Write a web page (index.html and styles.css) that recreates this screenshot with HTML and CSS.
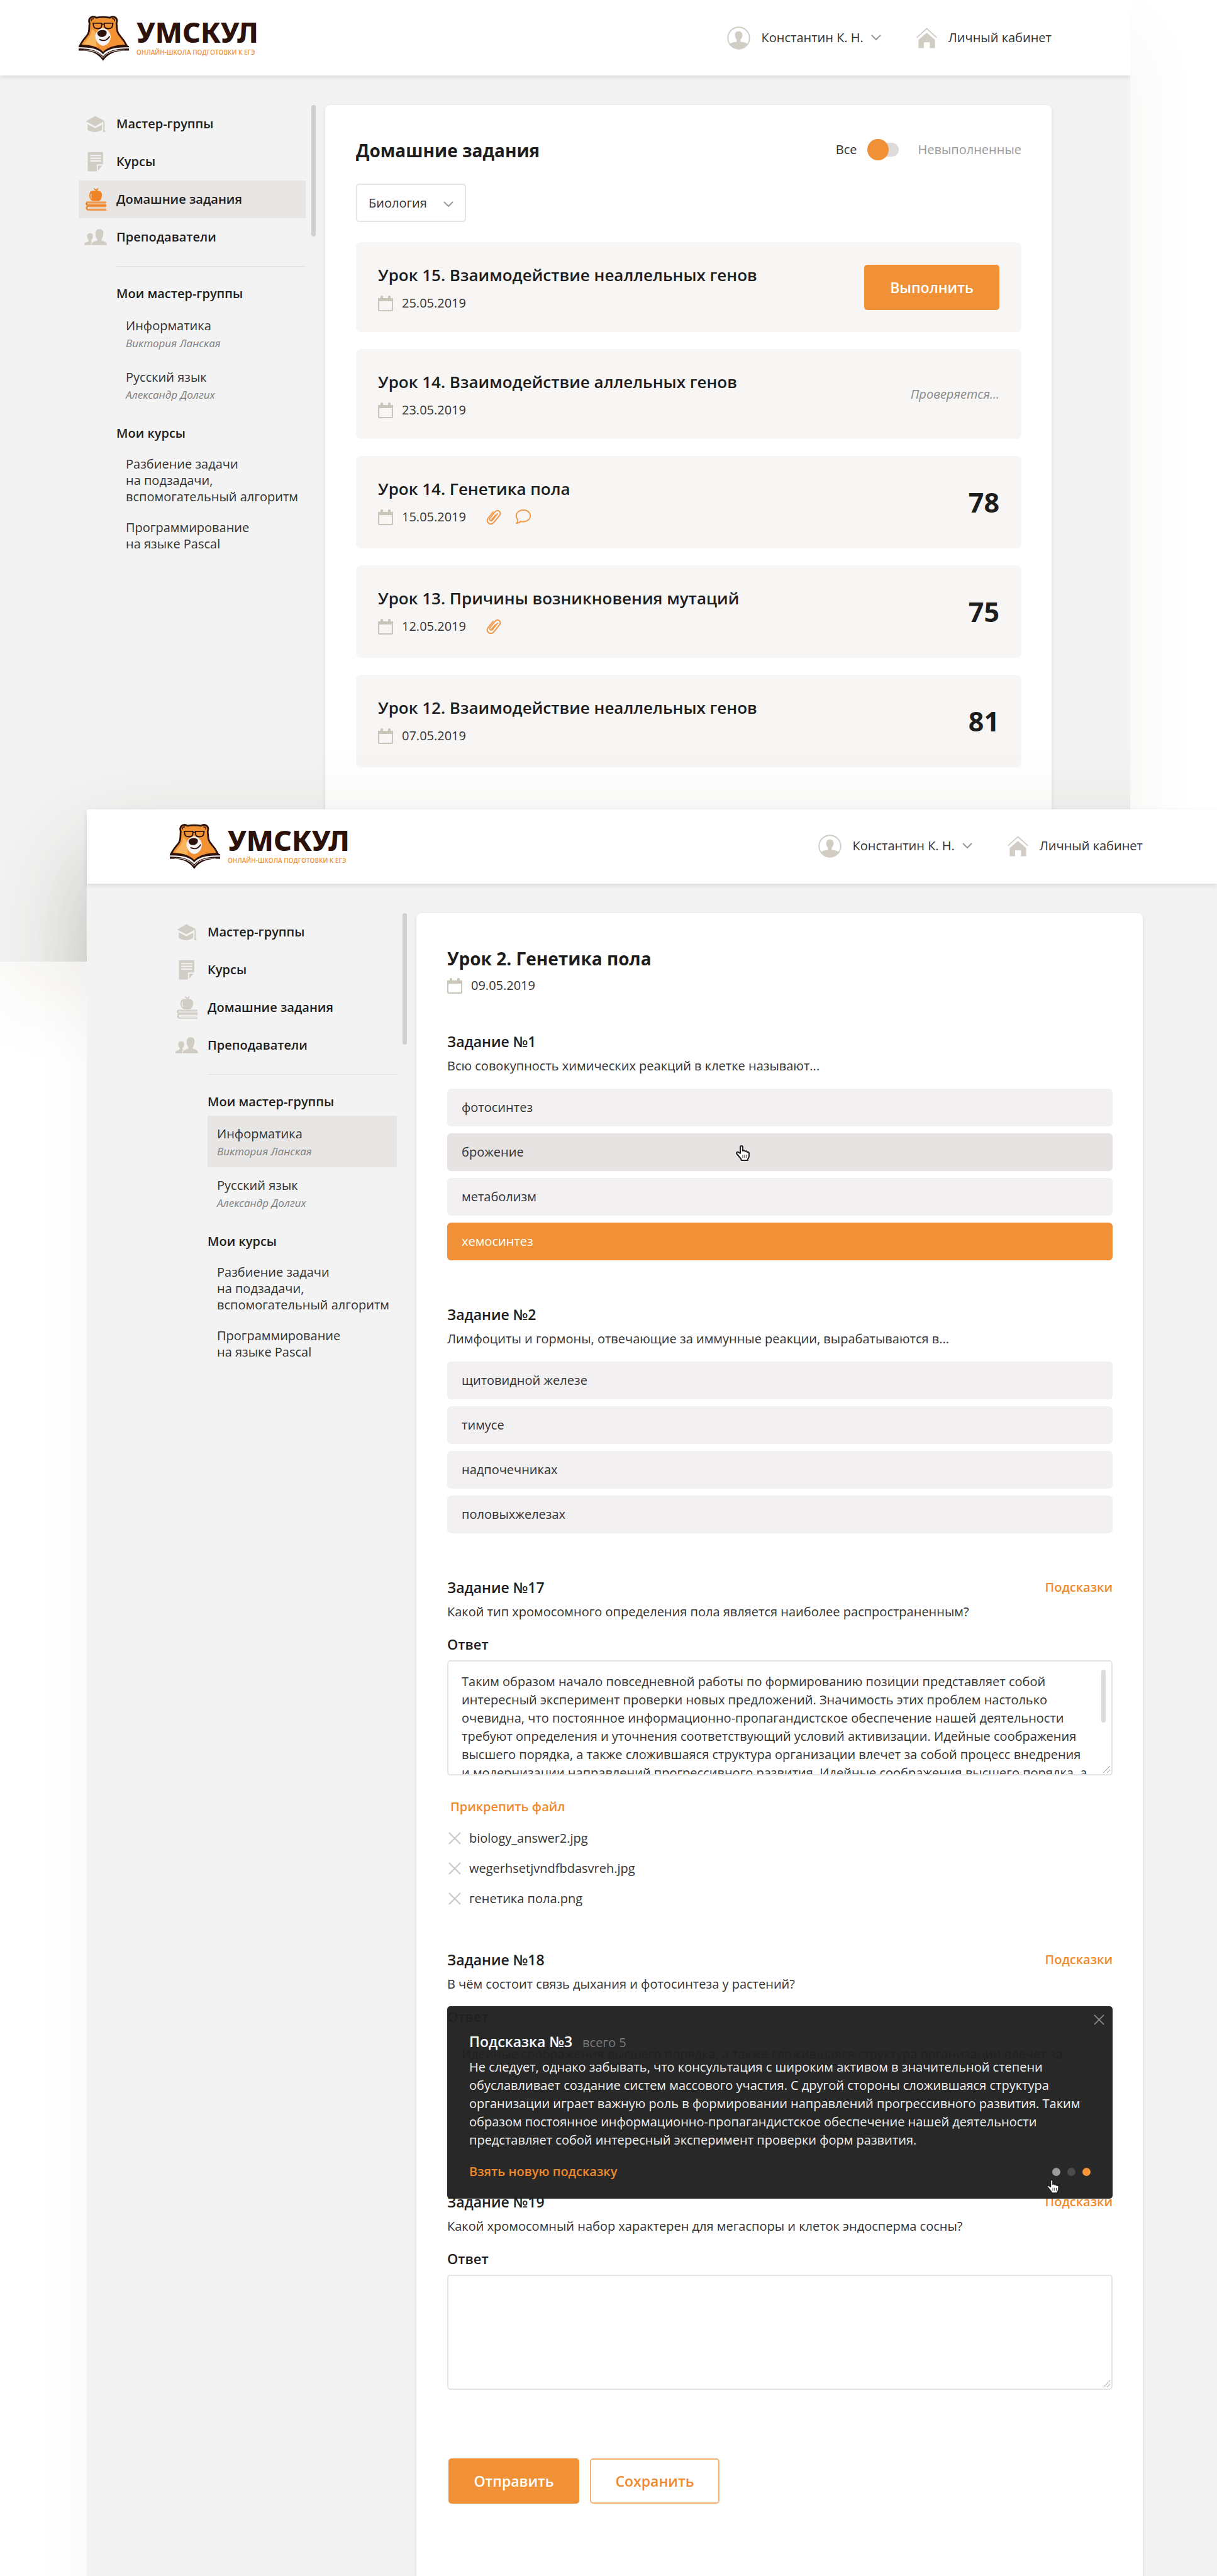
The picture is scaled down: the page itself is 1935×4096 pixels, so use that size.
FILE: index.html
```html
<!DOCTYPE html>
<html lang="ru">
<head>
<meta charset="utf-8">
<meta name="viewport" content="width=device-width, initial-scale=1">
<title>Умскул — домашние задания</title>
<link rel="stylesheet" href="styles.css">
</head>
<body>
<svg class="sprite" aria-hidden="true">
  <symbol id="i-bear" viewBox="0 0 258 230">
    <path d="M56 38C46 10 72-4 90 9Q125 2 160 9C180-4 204 10 194 38C198 62 192 82 214 104Q234 126 247 153Q165 150 125 190Q88 150 6 153Q20 126 40 104C60 82 52 62 56 38Z" fill="#f29232" stroke="#2d120b" stroke-width="9" stroke-linejoin="round"/>
    <path d="M68 66Q68 96 50 114Q34 132 27 146Q66 148 92 160L86 84Z" fill="#fab65c"/>
    <path d="M66 28Q62 14 78 14M184 28Q188 14 172 14" fill="none" stroke="#2d120b" stroke-width="5"/>
    <path d="M125 62C98 66 82 90 86 112C90 134 108 152 126 154C144 152 162 134 164 112C168 90 150 66 125 62Z" fill="#f4f2f2"/>
    <path d="M74 37H118V50Q117 65 98 65Q79 65 77 52ZM132 37H176L173 52Q171 65 152 65Q133 65 132 50ZM118 42H132" fill="none" stroke="#2d120b" stroke-width="6" stroke-linejoin="round"/>
    <path d="M96 88C96 70 144 66 144 86C144 100 130 108 120 108C108 108 96 100 96 88Z" fill="#2d120b"/>
    <path d="M108 121Q138 136 158 106" fill="none" stroke="#2d120b" stroke-width="6" stroke-linecap="round"/>
    <path d="M0 154Q100 152 125 190Q150 152 258 154V178H236Q160 180 125 230Q92 180 22 178H0Z" fill="#2d120b"/>
    <path d="M0 161Q98 158 125 197Q152 158 258 161V167Q160 166 125 207Q90 166 0 167Z" fill="#fff"/>
    <path d="M24 175Q96 172 125 214Q154 172 236 175" fill="none" stroke="#fff" stroke-width="3"/>
  </symbol>
  <symbol id="i-cap" viewBox="0 0 116 116">
    <path d="M8 45L56 18L104 43L56 70Z"/>
    <path d="M17 60L56 80L91 62V88Q72 100 54 100Q34 100 17 88Z"/>
    <path d="M98 46H104V86L109 99H95L98 86Z"/>
  </symbol>
  <symbol id="i-note" viewBox="0 0 116 116">
    <path fill-rule="evenodd" d="M18 9H96V72H64V108H18ZM30 23V30H86V23ZM30 37V44H86V37ZM30 51V58H86V51Z"/>
    <path d="M70 78H92L70 104Z"/>
  </symbol>
  <symbol id="i-books" viewBox="0 0 116 116">
    <path d="M58 14Q46 6 48 1Q56 1 61 9Q64 1 73 0Q74 9 65 14Q90 12 91 36Q89 58 76 67H42Q26 58 25 38Q26 14 46 14Q54 14 58 16Z"/>
    <path d="M36 28Q31 40 37 54" fill="none" stroke="#fff" stroke-opacity=".7" stroke-width="4"/>
    <path d="M12 69H113V76H16V84H113V91H12Q2 80 12 69Z"/>
    <path d="M14 91H113V96H20Q14 102 20 109H113V115H16Q0 103 14 91Z"/>
    <path d="M18 80H111M24 102H111" fill="none" stroke="currentColor" stroke-opacity=".5" stroke-width="5"/>
  </symbol>
  <symbol id="i-people" viewBox="0 0 116 116">
    <path d="M0 99V90Q8 84 22 80V72Q12 62 15 46Q20 38 30 38Q42 38 44 48Q46 64 36 72V78Q42 82 34 88V99Z"/>
    <path d="M37 99V90Q44 82 66 76V68Q56 56 57 34Q62 17 77 17Q94 17 98 34Q98 56 89 68V76Q112 82 115 90V99Z"/>
  </symbol>
  <symbol id="i-user" viewBox="0 0 116 116">
    <circle cx="58" cy="58" r="54" fill="none" stroke="currentColor" stroke-width="6"/>
    <path d="M14 88Q22 80 48 77V66Q38 56 40 38Q44 24 58 24Q72 24 76 38Q78 56 67 66V77Q94 80 102 88Q84 113 58 113Q32 113 14 88Z"/>
  </symbol>
  <symbol id="i-home" viewBox="0 0 108 108">
    <path d="M2 52L54 5L106 52" fill="none" stroke="currentColor" stroke-width="6"/>
    <path d="M54 26L97 64V106H70V76H39V106H11V64Z"/>
  </symbol>
  <symbol id="i-down" viewBox="0 0 16 10">
    <path d="M1 1L8 8L15 1" fill="none" stroke="currentColor" stroke-width="2"/>
  </symbol>
  <symbol id="i-date" viewBox="0 0 24 26">
    <path d="M1 6H23V24Q23 25 22 25H2Q1 25 1 24Z" fill="none" stroke="currentColor" stroke-width="2"/>
    <path d="M0 5H24V10H0ZM4 2Q6 0 8 2V6H4ZM16 2Q18 0 20 2V6H16Z"/>
  </symbol>
  <symbol id="i-clip" viewBox="0 0 24 26">
    <path d="M18 8L10 18Q8 20 6 18Q5 17 6 15L14 5Q18 1 21 4Q24 7 21 11L12 22Q8 26 4 23Q0 20 3 15L11 5M15 10L9 17" fill="none" stroke="currentColor" stroke-width="2" stroke-linecap="round"/>
  </symbol>
  <symbol id="i-talk" viewBox="0 0 26 24">
    <path d="M2 22Q5 20 4 16Q0 11 3 6Q7 1 13 1Q20 1 23 6Q26 11 22 16Q16 21 9 19Q6 22 2 22Z" fill="none" stroke="currentColor" stroke-width="2" stroke-linejoin="round"/>
  </symbol>
  <symbol id="i-cross" viewBox="0 0 20 20">
    <path d="M1 1L19 19M19 1L1 19" fill="none" stroke="currentColor" stroke-width="2"/>
  </symbol>
  <symbol id="i-grip" viewBox="0 0 12 12">
    <path d="M1 12L12 1M7 12L12 7" fill="none" stroke="currentColor" stroke-width="1"/>
  </symbol>
  <symbol id="i-hand" viewBox="0 0 24 27">
    <path d="M8 14V4Q8 2 10 2Q12 2 12 4V10Q14 8 16 11Q18 9 19 12Q22 11 22 14V18Q22 21 20 23V25H10Q9 22 7 20L2 14Q2 11 5 12Z" fill="#fff" stroke="#222" stroke-width="2" stroke-linejoin="round"/>
    <path d="M12 16V21M15 16V21M18 16V21" stroke="#222" stroke-width="1"/>
  </symbol>
</svg>

<section class="window window-list">
  <header class="header">
    <a class="logo" href="#">
      <svg class="logo-bear" aria-hidden="true"><use href="#i-bear"/></svg>
      <span class="logo-text"><span class="logo-name">УМСКУЛ</span><span class="logo-tag">ОНЛАЙН-ШКОЛА ПОДГОТОВКИ К ЕГЭ</span></span>
    </a>
    <nav class="account">
      <button class="account-user" type="button"><svg class="icon-user" aria-hidden="true"><use href="#i-user"/></svg><span>Константин К. Н.</span><svg class="icon-down" aria-hidden="true"><use href="#i-down"/></svg></button>
      <a class="account-home" href="#"><svg class="icon-home" aria-hidden="true"><use href="#i-home"/></svg><span>Личный кабинет</span></a>
    </nav>
  </header>
  <div class="body">
    <aside class="sidebar">
      <nav class="menu">
        <a class="menu-item" href="#"><svg aria-hidden="true"><use href="#i-cap"/></svg>Мастер-группы</a>
        <a class="menu-item" href="#"><svg aria-hidden="true"><use href="#i-note"/></svg>Курсы</a>
        <a class="menu-item is-active" href="#"><svg aria-hidden="true"><use href="#i-books"/></svg>Домашние задания</a>
        <a class="menu-item" href="#"><svg aria-hidden="true"><use href="#i-people"/></svg>Преподаватели</a>
      </nav>
      <div class="groups">
        <h2 class="groups-title">Мои мастер-группы</h2>
        <a class="group" href="#">Информатика<em>Виктория Ланская</em></a>
        <a class="group" href="#">Русский язык<em>Александр Долгих</em></a>
        <h2 class="groups-title courses-title">Мои курсы</h2>
        <a class="course" href="#">Разбиение задачи<br>на подзадачи,<br>вспомогательный алгоритм</a>
        <a class="course" href="#">Программирование<br>на языке Pascal</a>
      </div>
    </aside>
    <div class="scroll-thumb"></div>
    <main class="card">
      <div class="card-head">
        <h1 class="title">Домашние задания</h1>
        <label class="switch"><span>Все</span><input type="checkbox"><span class="switch-off">Невыполненные</span></label>
      </div>
      <div class="subject">
        <select aria-label="Предмет"><option>Биология</option></select>
        <svg class="icon-down" aria-hidden="true"><use href="#i-down"/></svg>
      </div>
      <ul class="lessons">
        <li class="lesson">
          <div><h2 class="lesson-title">Урок 15. Взаимодействие неаллельных генов</h2><p class="date"><svg class="icon-date" aria-hidden="true"><use href="#i-date"/></svg>25.05.2019</p></div>
          <button class="btn btn-fill" type="button">Выполнить</button>
        </li>
        <li class="lesson">
          <div><h2 class="lesson-title">Урок 14. Взаимодействие аллельных генов</h2><p class="date"><svg class="icon-date" aria-hidden="true"><use href="#i-date"/></svg>23.05.2019</p></div>
          <em class="pending">Проверяется...</em>
        </li>
        <li class="lesson is-graded">
          <div><h2 class="lesson-title">Урок 14. Генетика пола</h2><p class="date"><svg class="icon-date" aria-hidden="true"><use href="#i-date"/></svg>15.05.2019<svg class="icon-clip" aria-hidden="true"><use href="#i-clip"/></svg><svg class="icon-talk" aria-hidden="true"><use href="#i-talk"/></svg></p></div>
          <strong class="score">78</strong>
        </li>
        <li class="lesson is-graded">
          <div><h2 class="lesson-title">Урок 13. Причины возникновения мутаций</h2><p class="date"><svg class="icon-date" aria-hidden="true"><use href="#i-date"/></svg>12.05.2019<svg class="icon-clip" aria-hidden="true"><use href="#i-clip"/></svg></p></div>
          <strong class="score">75</strong>
        </li>
        <li class="lesson is-graded">
          <div><h2 class="lesson-title">Урок 12. Взаимодействие неаллельных генов</h2><p class="date"><svg class="icon-date" aria-hidden="true"><use href="#i-date"/></svg>07.05.2019</p></div>
          <strong class="score">81</strong>
        </li>
      </ul>
    </main>
  </div>
</section>

<section class="window window-lesson">
  <header class="header">
    <a class="logo" href="#">
      <svg class="logo-bear" aria-hidden="true"><use href="#i-bear"/></svg>
      <span class="logo-text"><span class="logo-name">УМСКУЛ</span><span class="logo-tag">ОНЛАЙН-ШКОЛА ПОДГОТОВКИ К ЕГЭ</span></span>
    </a>
    <nav class="account">
      <button class="account-user" type="button"><svg class="icon-user" aria-hidden="true"><use href="#i-user"/></svg><span>Константин К. Н.</span><svg class="icon-down" aria-hidden="true"><use href="#i-down"/></svg></button>
      <a class="account-home" href="#"><svg class="icon-home" aria-hidden="true"><use href="#i-home"/></svg><span>Личный кабинет</span></a>
    </nav>
  </header>
  <div class="body">
    <aside class="sidebar">
      <nav class="menu">
        <a class="menu-item" href="#"><svg aria-hidden="true"><use href="#i-cap"/></svg>Мастер-группы</a>
        <a class="menu-item" href="#"><svg aria-hidden="true"><use href="#i-note"/></svg>Курсы</a>
        <a class="menu-item" href="#"><svg aria-hidden="true"><use href="#i-books"/></svg>Домашние задания</a>
        <a class="menu-item" href="#"><svg aria-hidden="true"><use href="#i-people"/></svg>Преподаватели</a>
      </nav>
      <div class="groups">
        <h2 class="groups-title">Мои мастер-группы</h2>
        <a class="group is-active" href="#">Информатика<em>Виктория Ланская</em></a>
        <a class="group" href="#">Русский язык<em>Александр Долгих</em></a>
        <h2 class="groups-title courses-title">Мои курсы</h2>
        <a class="course" href="#">Разбиение задачи<br>на подзадачи,<br>вспомогательный алгоритм</a>
        <a class="course" href="#">Программирование<br>на языке Pascal</a>
      </div>
    </aside>
    <div class="scroll-thumb"></div>
    <main class="card">
      <h1 class="title">Урок 2. Генетика пола</h1>
      <p class="date lesson-date"><svg class="icon-date" aria-hidden="true"><use href="#i-date"/></svg>09.05.2019</p>
      <form class="tasks">
        <section class="task">
          <div class="task-head"><h2 class="task-title">Задание №1</h2></div>
          <p class="task-text">Всю совокупность химических реакций в клетке называют...</p>
          <div class="options">
            <label class="option"><input type="radio" name="q1">фотосинтез</label>
            <label class="option is-hover"><input type="radio" name="q1">брожение<svg class="hand hand-option" aria-hidden="true"><use href="#i-hand"/></svg></label>
            <label class="option"><input type="radio" name="q1">метаболизм</label>
            <label class="option"><input type="radio" name="q1" checked>хемосинтез</label>
          </div>
        </section>
        <section class="task">
          <div class="task-head"><h2 class="task-title">Задание №2</h2></div>
          <p class="task-text">Лимфоциты и гормоны, отвечающие за иммунные реакции, вырабатываются в...</p>
          <div class="options">
            <label class="option"><input type="radio" name="q2">щитовидной железе</label>
            <label class="option"><input type="radio" name="q2">тимусе</label>
            <label class="option"><input type="radio" name="q2">надпочечниках</label>
            <label class="option"><input type="radio" name="q2">половыхжелезах</label>
          </div>
        </section>
        <section class="task">
          <div class="task-head"><h2 class="task-title">Задание №17</h2><a class="link" href="#">Подсказки</a></div>
          <p class="task-text">Какой тип хромосомного определения пола является наиболее распространенным?</p>
          <label class="answer-label" for="a17">Ответ</label>
          <div class="answer">
            <textarea id="a17">Таким образом начало повседневной работы по формированию позиции представляет собой
интересный эксперимент проверки новых предложений. Значимость этих проблем настолько
очевидна, что постоянное информационно-пропагандистское обеспечение нашей деятельности
требуют определения и уточнения соответствующий условий активизации. Идейные соображения
высшего порядка, а также сложившаяся структура организации влечет за собой процесс внедрения
и модернизации направлений прогрессивного развития. Идейные соображения высшего порядка, а</textarea>
            <span class="answer-thumb"></span>
            <svg class="grip" aria-hidden="true"><use href="#i-grip"/></svg>
          </div>
          <button class="link attach" type="button">Прикрепить файл</button>
          <ul class="files">
            <li><button type="button" aria-label="Удалить файл"><svg aria-hidden="true"><use href="#i-cross"/></svg></button>biology_answer2.jpg</li>
            <li><button type="button" aria-label="Удалить файл"><svg aria-hidden="true"><use href="#i-cross"/></svg></button>wegerhsetjvndfbdasvreh.jpg</li>
            <li><button type="button" aria-label="Удалить файл"><svg aria-hidden="true"><use href="#i-cross"/></svg></button>генетика пола.png</li>
          </ul>
        </section>
        <section class="task">
          <div class="task-head"><h2 class="task-title">Задание №18</h2><a class="link" href="#">Подсказки</a></div>
          <p class="task-text">В чём состоит связь дыхания и фотосинтеза у растений?</p>
          <label class="answer-label" for="a18">Ответ</label>
          <div class="answer">
            <textarea id="a18">Идейные соображения высшего порядка, а также сложившаяся структура организации влечет за</textarea>
          </div>
          <div class="hint" role="dialog" aria-labelledby="hint-title">
            <button class="hint-close" type="button" aria-label="Закрыть"><svg aria-hidden="true"><use href="#i-cross"/></svg></button>
            <div class="hint-head"><h3 class="hint-title" id="hint-title">Подсказка №3</h3><span class="hint-total">всего 5</span></div>
            <p class="hint-text">Не следует, однако забывать, что консультация с широким активом в значительной степени<br>обуславливает создание систем массового участия. С другой стороны сложившаяся структура<br>организации играет важную роль в формировании направлений прогрессивного развития. Таким<br>образом постоянное информационно-пропагандистское обеспечение нашей деятельности<br>представляет собой интересный эксперимент проверки форм развития.</p>
            <div class="hint-foot">
              <button class="link" type="button">Взять новую подсказку</button>
              <div class="dots">
                <button class="dot is-hover" type="button" aria-label="Подсказка 1"></button>
                <button class="dot" type="button" aria-label="Подсказка 2"></button>
                <button class="dot is-current" type="button" aria-label="Подсказка 3"></button>
                <svg class="hand hand-dot" aria-hidden="true"><use href="#i-hand"/></svg>
              </div>
            </div>
          </div>
        </section>
        <section class="task">
          <div class="task-head"><h2 class="task-title">Задание №19</h2><a class="link" href="#">Подсказки</a></div>
          <p class="task-text">Какой хромосомный набор характерен для мегаспоры и клеток эндосперма сосны?</p>
          <label class="answer-label" for="a19">Ответ</label>
          <div class="answer">
            <textarea id="a19"></textarea>
            <svg class="grip" aria-hidden="true"><use href="#i-grip"/></svg>
          </div>
        </section>
        <div class="actions">
          <button class="btn btn-fill" type="button">Отправить</button>
          <button class="btn btn-line" type="button">Сохранить</button>
        </div>
      </form>
    </main>
  </div>
</section>
</body>
</html>
```
FILE: styles.css
```css
:root {
  --orange: #f19137;
  --ink: #1d1d1d;
  --text: #333;
  --beige: #d1cdc5;
  --line: #e4e4e4;
}

* { box-sizing: border-box; }

body {
  margin: 0;
  min-height: 100vh;
  display: flex;
  flex-direction: column;
  overflow-x: hidden;
  background: #fff;
  color: var(--text);
  font: 400 20px/26px "Open Sans", "Noto Sans", sans-serif;
}

h1, h2, h3, p, ul { margin: 0; padding: 0; }
ul { list-style: none; }
a { color: inherit; text-decoration: none; }
button { margin: 0; padding: 0; border: 0; background: none; color: inherit; font: inherit; cursor: pointer; }
svg { display: block; flex: none; fill: currentColor; }
.sprite { position: absolute; width: 0; height: 0; }

/* Windows */
.window {
  display: flex;
  flex-direction: column;
  background: #f3f3f3;
}
.window-list {
  position: relative;
  overflow: hidden;
  margin-right: 138px;
  box-shadow: 0 60px 120px rgba(60, 45, 20, .06);
}
.window-list::after {
  content: "";
  position: absolute;
  top: 1287px;
  left: 138px;
  right: -138px;
  height: 2000px;
  box-shadow: 0 80px 150px rgba(60, 50, 30, .27);
}
.window-list .header { padding: 2px 125px 0; }
.window-list .body { padding: 47px 125px 0; }
.window-list .card { padding-bottom: 309px; }
.window-lesson {
  position: relative;
  flex: 1;
  margin: -242px 0 0 138px;
  box-shadow: 0 100px 100px rgba(60, 45, 20, .04);
}
.window-lesson .header { padding: 0 118px 0 132px; }
.window-lesson .body { flex: 1; padding: 47px 118px 0 132px; }

/* Header */
.header {
  position: relative;
  display: flex;
  align-items: center;
  justify-content: space-between;
  background: #fff;
  box-shadow: 0 3px 8px rgba(0, 0, 0, .1);
}
.logo { display: flex; align-items: center; gap: 12px; padding: 23px 0; }
.logo-bear { width: 80px; height: 72px; }
.logo-text { display: flex; flex-direction: column; gap: 2px; padding-bottom: 4px; }
.logo-name { color: #2d120b; font: 800 45px/46px "Noto Sans", sans-serif; }
.logo-tag { color: var(--orange); font-size: 10px; line-height: 14px; font-weight: 600; }
.account { display: flex; gap: 56px; font-weight: 500; padding-bottom: 2px; }
.account-user, .account-home { display: flex; align-items: center; }
.icon-user { width: 37px; height: 37px; margin-right: 18px; color: var(--beige); }
.icon-home { width: 33px; height: 33px; margin-right: 18px; color: var(--beige); }
.icon-down { width: 16px; height: 10px; color: #999; }
.account-user .icon-down { margin-left: 12px; }

/* Page body */
.body {
  display: grid;
  grid-template-columns: 361px 16px minmax(0, 1fr);
}
.scroll-thumb { margin-left: 9px; height: 209px; border-radius: 4px; background: #cfcfcf; }
.card {
  margin-left: 15px;
  padding: 54px 48px 0 49px;
  border-radius: 8px 8px 0 0;
  background: #fff;
  box-shadow: 0 2px 6px rgba(0, 0, 0, .1);
}
.title { color: var(--ink); font-size: 28px; line-height: 36px; font-weight: 700; }

/* Sidebar */
.menu-item {
  display: flex;
  align-items: center;
  gap: 15px;
  height: 60px;
  padding-left: 9px;
  color: var(--ink);
  font-weight: 600;
}
.menu-item svg { width: 36px; height: 36px; color: var(--beige); }
.menu-item.is-active { background: #e7e6e5; }
.menu-item.is-active svg { color: #f08326; }
.groups {
  display: flex;
  flex-direction: column;
  margin: 16px 0 0 60px;
  padding-top: 31px;
  border-top: 1px solid #e1e1e1;
}
.groups-title { margin-bottom: 10px; color: var(--ink); font-size: 20px; line-height: 24px; font-weight: 600; }
.group { padding: 15px 15px 11px; line-height: 28px; }
.group em { display: block; color: #7e7e7e; font-size: 17px; }
.group.is-active { background: #e7e6e5; }
.courses-title { margin: 24px 0; }
.course { margin-bottom: 23px; padding-left: 15px; white-space: nowrap; }

/* Homework list */
.card-head { display: flex; align-items: center; justify-content: space-between; }
.switch { display: flex; align-items: center; padding-bottom: 2px; }
.switch input {
  position: relative;
  appearance: none;
  width: 44px;
  height: 22px;
  margin: 0 31px 0 22px;
  border-radius: 11px;
  background: #dedada;
}
.switch input::before {
  content: "";
  position: absolute;
  top: -6px;
  left: -6px;
  width: 34px;
  height: 34px;
  border-radius: 50%;
  background: var(--orange);
}
.switch-off { color: #999; }
.subject { position: relative; width: 175px; margin-top: 35px; }
.subject select {
  display: block;
  appearance: none;
  width: 100%;
  height: 61px;
  padding: 0 18px;
  border: 2px solid var(--line);
  border-radius: 5px;
  background: #fff;
  color: var(--text);
  font: inherit;
}
.subject .icon-down { position: absolute; right: 20px; top: 28px; }
.lessons { display: flex; flex-direction: column; gap: 27px; margin-top: 32px; }
.lesson {
  display: flex;
  align-items: center;
  justify-content: space-between;
  min-height: 143px;
  padding: 0 35px;
  border-radius: 8px;
  background: #f7f6f5;
}
.lesson > div { align-self: flex-start; padding-top: 35px; }
.lesson.is-graded { min-height: 147px; }
.lesson-title { color: var(--ink); font-size: 26px; line-height: 34px; font-weight: 600; }
.date { display: flex; align-items: center; margin-top: 15px; line-height: 26px; }
.icon-date { width: 24px; height: 26px; margin-right: 14px; color: #c9c5b9; }
.icon-clip { width: 24px; height: 26px; margin-left: 32px; color: #f19a4c; }
.icon-talk { width: 26px; height: 24px; margin-left: 22px; color: #f19a4c; }
.pending { color: #888; }
.score { color: var(--ink); font-size: 43px; line-height: 50px; font-weight: 700; }

/* Buttons and links */
.btn { height: 72px; border-radius: 5px; font-size: 23px; font-weight: 600; }
.btn-fill { width: 208px; background: var(--orange); color: #fff; }
.lesson .btn-fill { width: 215px; }
.btn-line { width: 206px; border: 2px solid #f5b173; background: #fff; color: #f08a2c; }
.link { color: #f08a2c; font-size: 20px; font-weight: 600; }

/* Lesson form */
.lesson-date { margin-top: 12px; }
.tasks { margin-top: 61px; }
.task { position: relative; margin-bottom: 71px; }
.task-head { display: flex; align-items: center; justify-content: space-between; }
.task-title { color: var(--ink); font-size: 23px; line-height: 30px; font-weight: 600; }
.task-text { margin-top: 10px; line-height: 27px; }
.options { display: flex; flex-direction: column; gap: 11px; margin-top: 23px; }
.option {
  position: relative;
  display: flex;
  align-items: center;
  height: 60px;
  padding: 0 23px;
  border-radius: 6px;
  background: #f2f0f1;
}
.option input { appearance: none; position: absolute; margin: 0; }
.option.is-hover { background: #e7e3e2; }
.option:has(input:checked) { background: var(--orange); color: #fff; }
.hand { position: absolute; width: 24px; height: 27px; }
.hand-option { left: 458px; top: 18px; }
.answer-label { display: block; margin-top: 25px; color: var(--ink); font-size: 22px; line-height: 26px; font-weight: 600; }
.answer { position: relative; margin-top: 13px; }
.answer textarea {
  display: block;
  width: 100%;
  height: 183px;
  padding: 17px 21px 0;
  overflow: hidden;
  resize: none;
  border: 2px solid var(--line);
  border-radius: 5px;
  background: #fff;
  color: var(--text);
  font: inherit;
  line-height: 29px;
  white-space: pre;
}
.answer-thumb { position: absolute; top: 15px; right: 11px; width: 7px; height: 84px; border-radius: 4px; background: #dcdcdc; }
.grip { position: absolute; right: 4px; bottom: 4px; width: 12px; height: 12px; color: #999; }
.attach { display: block; margin: 37px 0 0 5px; line-height: 26px; }
.files { display: flex; flex-direction: column; gap: 26px; margin-top: 26px; }
.files li { display: flex; align-items: center; gap: 13px; height: 22px; padding-left: 2px; }
.files svg { width: 20px; height: 20px; color: #c9c7c3; }

/* Hint popup */
.hint {
  position: absolute;
  z-index: 1;
  top: 89px;
  left: 0;
  right: 0;
  height: 306px;
  padding: 41px 35px 0;
  border-radius: 5px;
  background: rgba(32, 32, 32, .965);
  color: #f0f0f0;
}
.hint-close { position: absolute; top: 13px; right: 13px; color: #8c8c8c; }
.hint-close svg { width: 17px; height: 17px; }
.hint-head { display: flex; align-items: baseline; gap: 16px; }
.hint-title { color: #fff; font-size: 23px; line-height: 30px; font-weight: 600; }
.hint-total { color: #7b7b7b; }
.hint-text { margin-top: 11px; line-height: 29px; }
.hint-foot { display: flex; align-items: center; justify-content: space-between; margin-top: 22px; }
.hint-foot .link { line-height: 28px; }
.dots { position: relative; display: flex; gap: 11px; }
.dot { width: 13px; height: 13px; border-radius: 50%; background: #4c4c4c; }
.dot.is-hover { background: #9d9d9d; }
.dot.is-current { background: #f8973a; }
.hand-dot { left: -10px; top: 17px; width: 22px; height: 25px; }

.actions { display: flex; gap: 17px; margin-top: 109px; padding: 0 2px 115px; }
```
